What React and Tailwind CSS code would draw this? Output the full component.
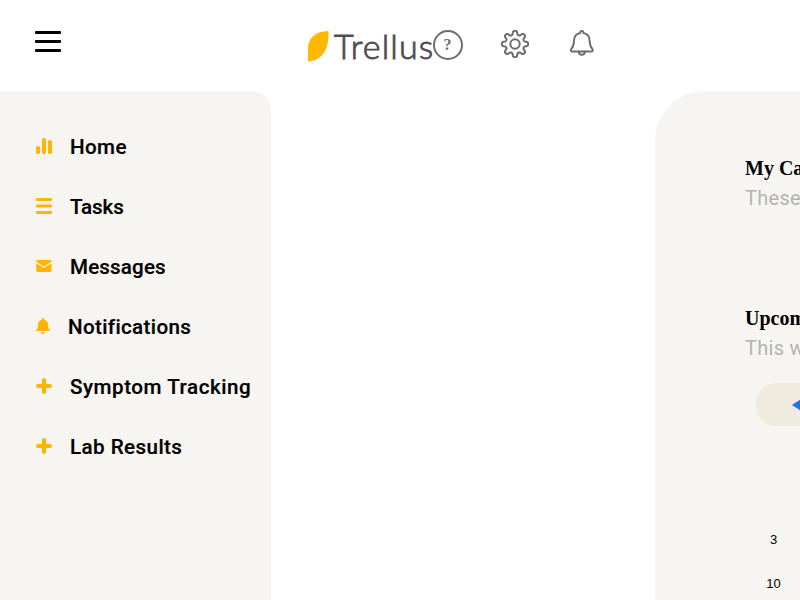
const amber = '#ffb400';

const Bars = () => (
  <svg width="16" height="16" viewBox="0 0 16 16" fill={amber}>
    <rect x="0" y="8" width="4" height="8" rx="1.6" />
    <rect x="6" y="0" width="4" height="16" rx="1.6" />
    <rect x="12" y="2" width="4" height="14" rx="1.6" />
  </svg>
);

const Lines = () => (
  <svg width="16" height="16" viewBox="0 0 16 16" fill={amber}>
    <rect x="0" y="0" width="16" height="3" rx="1.2" />
    <rect x="0" y="6.5" width="16" height="3" rx="1.2" />
    <rect x="0" y="13" width="16" height="3" rx="1.2" />
  </svg>
);

const Mail = () => (
  <svg width="16" height="16" viewBox="0 0 16 16" fill={amber}>
    <rect x="0.3" y="2" width="15.2" height="12" rx="1.2" />
    <path d="M0 4.2L7.9 9.2L16 4.2" fill="none" stroke="#f6f5f1" strokeWidth="1.3" />
  </svg>
);

const Bell = () => (
  <svg width="14" height="16" viewBox="0 0 14 16" fill={amber}>
    <path d="M7 0C6.4 0 6 .5 6 1.1V1.7C3.4 2.2 2 4.1 2 6.5C2 10 1.4 10.7.3 12C-.2 12.5.1 13 .8 13H13.2C13.9 13 14.2 12.5 13.7 12C12.6 10.7 12 10 12 6.5C12 4.1 10.6 2.2 8 1.7V1.1C8 .5 7.6 0 7 0ZM5 14H9C9 15.2 8.1 16 7 16C5.9 16 5 15.2 5 14Z" />
  </svg>
);

const Plus = () => (
  <svg width="16" height="16" viewBox="0 0 16 16" stroke={amber} strokeWidth="4" strokeLinecap="round">
    <path d="M8 2V14M2 8H14" />
  </svg>
);

const items = [
  { label: 'Home', Icon: Bars, tracking: 'tracking-[0.4px]' },
  { label: 'Tasks', Icon: Lines, tracking: 'tracking-[-0.1px]' },
  { label: 'Messages', Icon: Mail, tracking: 'tracking-[0.15px]' },
  { label: 'Notifications', Icon: Bell, tracking: 'tracking-[0.35px]' },
  { label: 'Symptom Tracking', Icon: Plus, tracking: 'tracking-[0.53px]' },
  { label: 'Lab Results', Icon: Plus, tracking: 'tracking-[0.43px]' },
];

const gearPath = (() => {
  const points = [];
  for (let i = 0; i <= 160; i += 1) {
    const a = (i / 160) * Math.PI * 2;
    const wave = Math.tanh(1.8 * Math.cos(8 * a)) / Math.tanh(1.8);
    const r = 11.3 + 1.9 * wave;
    points.push(`${(14 + r * Math.sin(a)).toFixed(2)} ${(14 - r * Math.cos(a)).toFixed(2)}`);
  }
  return `M${points.join('L')}Z`;
})();

function Header() {
  return (
    <header className="flex h-[91px] shrink-0 items-start">
      <svg className="mt-[31px] ml-[35px] shrink-0" width="26" height="21" viewBox="0 0 26 21">
        <rect width="26" height="3" rx="1" />
        <rect y="9" width="26" height="3" rx="1" />
        <rect y="18" width="26" height="3" rx="1" />
      </svg>
      <div className="ml-[247px] flex w-[125px] shrink-0 items-start">
        <svg className="mt-[31px] shrink-0" width="21" height="31" viewBox="0 0 21 31">
          <path d="M20.4 0C8 .4 0 6.5 0 17V30.4C13.5 29.5 21.5 19 20.4 0Z" fill="#ffb800" />
        </svg>
        <span className="mt-[26px] ml-[5px] font-[Lato,sans-serif] text-[34px] leading-[40px] font-light tracking-[1.1px] whitespace-nowrap text-[#4f4f51] [-webkit-text-stroke:0.9px_#4f4f51]">Trellus</span>
      </div>
      <div className="mt-[30px] flex size-[30px] shrink-0 items-center justify-center rounded-full border-2 border-[#6d6d6d] pr-px pb-px font-['Liberation_Serif',serif] text-[16px] leading-none font-bold text-[#6d6d6d]">?</div>
      <svg className="mt-[30px] ml-[38px] shrink-0" width="28" height="28" viewBox="0 0 28 28" fill="none" stroke="#6d6d6d" strokeWidth="2" strokeLinejoin="round">
        <path d={gearPath} />
        <circle cx="14" cy="14" r="4.7" />
      </svg>
      <svg className="mt-[30px] ml-[41px] shrink-0" width="24" height="26" viewBox="0 0 25 27" fill="none" stroke="#6d6d6d" strokeWidth="2" strokeLinejoin="round" strokeLinecap="round">
        <path d="M10.7 3.1V2.4C10.7 .4 13.9 .4 13.9 2.4V3.1C18.2 3.8 20.3 7 20.4 10.8C20.5 16 21.3 17.6 23.5 20.2C24 21 23.7 22.3 22.8 22.3H1.8C.9 22.3 .6 21 1.1 20.2C3.3 17.6 4.1 16 4.2 10.8C4.3 7 6.4 3.8 10.7 3.1Z" />
        <path d="M9 22.5C9.2 24.5 10.5 25.8 12.3 25.8C14.1 25.8 15.4 24.5 15.6 22.5" />
      </svg>
    </header>
  );
}

function Sidebar() {
  return (
    <nav className="w-[271px] shrink-0 rounded-tr-[20px] bg-[#f6f5f1] pt-[25px] pl-9">
      {items.map(({ label, Icon, tracking }) => (
        <div key={label} className="flex h-[60px] items-center gap-[18px]">
          <Icon />
          <span className={`pt-0.5 font-[Roboto,sans-serif] text-[20.6px] leading-6 font-medium whitespace-nowrap text-black [-webkit-text-stroke:0.2px_black] ${tracking}`}>{label}</span>
        </div>
      ))}
    </nav>
  );
}

function Section({ title, text }) {
  return (
    <section className="h-[150px] shrink-0 pl-[90px] whitespace-nowrap">
      <h2 className="font-['Liberation_Serif',serif] text-[20px] leading-[30px] font-bold text-black">{title}</h2>
      <p className="font-[Roboto,sans-serif] text-[20px] leading-[30px] font-normal tracking-[0.3px] text-[#b3b3b3]">{text}</p>
    </section>
  );
}

export default function App() {
  return (
    <div className="flex h-[600px] w-[800px] flex-col overflow-hidden bg-white">
      <Header />
      <div className="flex min-h-0 flex-1">
        <Sidebar />
        <main className="ml-[384px] w-[145px] shrink-0 overflow-hidden rounded-tl-[50px] bg-[#f6f5f1] pt-[62px]">
          <Section title="My Ca" text="These" />
          <div className="h-[80px]">
            <Section title="Upcom" text="This w" />
          </div>
          <div className="ml-[101px] flex h-[43px] w-[100px] items-center rounded-l-[20px] bg-[#efebdf] pl-[36px]">
            <svg width="10" height="12" viewBox="0 0 10 12"><path d="M0 6L8.5 .5V11.5Z" fill="#1f74e8" /></svg>
          </div>
          <div className="mt-[92px] ml-[101px] w-[35px] text-center font-['Liberation_Sans',Arial,sans-serif] text-[13px] leading-[44px] text-black">
            <div>3</div>
            <div>10</div>
          </div>
        </main>
      </div>
    </div>
  );
}
